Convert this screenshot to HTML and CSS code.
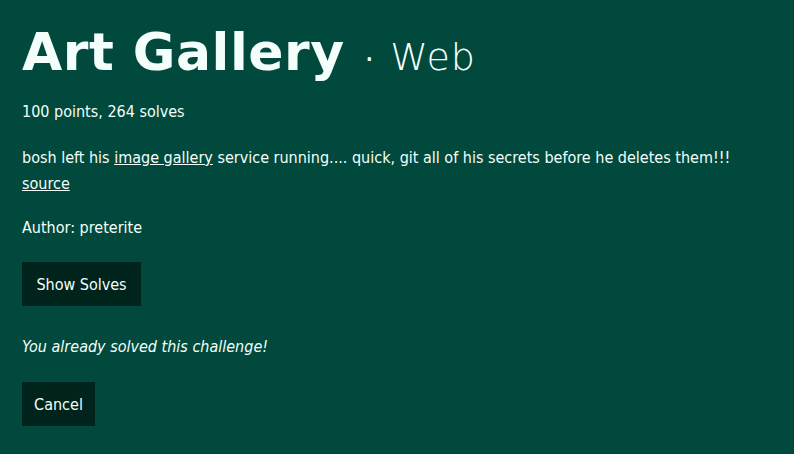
FILE: index.html
```html
<!DOCTYPE html>
<html>
<head>
<meta charset="utf-8">
<link rel="stylesheet" href="styles.css">
</head>
<body>
<div class="modal">
  <h1 class="title"><span class="name">Art Gallery</span><span class="dot">·</span><span class="cat">Web</span></h1>
  <p class="meta">100 points, 264 solves</p>
  <p class="desc">bosh left his <a href="#">image gallery</a> service running.... quick, git all of his secrets before he deletes them!!!<br><a href="#">source</a></p>
  <p class="author">Author: preterite</p>
  <button class="btn solves">Show Solves</button>
  <p class="solved">You already solved this challenge!</p>
  <button class="btn cancel">Cancel</button>
</div>
</body>
</html>
```
FILE: styles.css
```css
html, body {
  margin: 0;
  padding: 0;
  background: #00493c;
  width: 794px;
  height: 454px;
  overflow: hidden;
}
body {
  font-family: "Liberation Sans Narrow", "DejaVu Sans Condensed", "Liberation Sans", sans-serif;
  color: #f4fffb;
  font-size: 16px;
}
.modal {
  padding: 22px 22px 0 22px;
}
.title {
  margin: 0;
  display: flex;
  align-items: baseline;
  font-weight: normal;
  line-height: 60px;
  height: 60px;
}
.name {
  font-family: "DejaVu Sans", sans-serif;
  font-weight: bold;
  font-size: 52px;
  letter-spacing: 0.5px;
}
.dot {
  font-family: "DejaVu Sans", sans-serif;
  font-size: 30px;
  margin: 0 16px 0 20px;
}
.cat {
  font-family: "DejaVu Sans", sans-serif;
  font-size: 38px;
  font-weight: 300;
  letter-spacing: 1px;
}
.meta {
  margin: 19px 0 0 0;
  line-height: 22px;
}
.desc {
  margin: 22px 0 0 0;
  line-height: 26px;
}
.desc a {
  color: inherit;
  text-decoration: underline;
}
.author {
  margin: 20px 0 0 0;
  line-height: 22px;
}
.btn {
  display: block;
  border: none;
  background: #00231c;
  color: #f4fffb;
  font-family: inherit;
  font-size: 16px;
  height: 44px;
  padding: 0 12px;
  cursor: pointer;
}
.solves {
  margin-top: 23px;
  width: 119px;
}
.solved {
  margin: 30px 0 0 0;
  font-style: italic;
  line-height: 22px;
}
.cancel {
  margin-top: 24px;
  width: 73px;
}
```
